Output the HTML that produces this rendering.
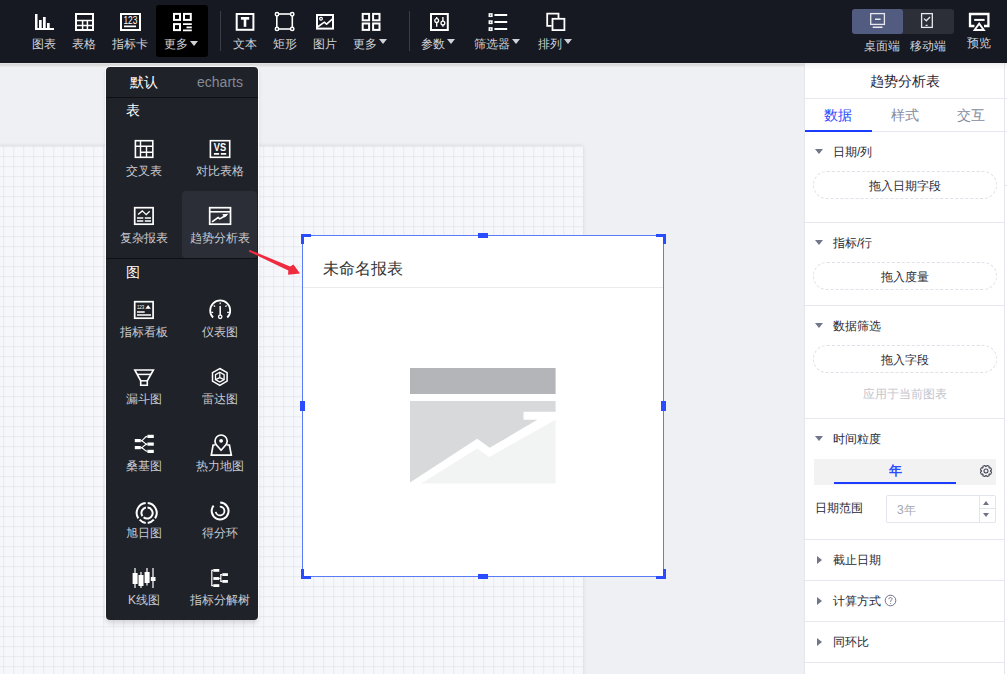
<!DOCTYPE html>
<html><head><meta charset="utf-8">
<style>
*{box-sizing:border-box;margin:0;padding:0}
html,body{width:1007px;height:674px;overflow:hidden}
body{position:relative;background:#eef0f4;font-family:"Liberation Sans",sans-serif;color:#333}
.abs{position:absolute}
#top{position:absolute;left:0;top:0;width:1007px;height:63px;background:#161921;z-index:10}
#tshadow{z-index:9;position:absolute;left:0;top:63px;width:804px;height:6px;background:linear-gradient(#e3e3e4 0,#d9d9da 1.5px,#e2e2e3 3px,#f3f3f4 5px,rgba(243,243,244,0) 6px)}
.tb{position:absolute;top:0;height:62px}
.tb svg{position:absolute;overflow:visible}
.tl{position:absolute;top:36px;height:16px;line-height:16px;font-size:12px;color:#d0d2d8;white-space:nowrap;text-align:center}
.sep{position:absolute;top:11px;width:1px;height:40px;background:#3a3d46}
.caret{display:inline-block;width:0;height:0;border-left:4px solid transparent;border-right:4px solid transparent;border-top:5.5px solid #d0d2d8;vertical-align:middle;margin-left:2px;position:relative;top:-3px}
#paper{position:absolute;left:-20px;top:146px;width:603px;height:560px;background-color:#f5f7fb;
background-image:linear-gradient(to right,rgba(50,54,66,.05) 1px,rgba(50,54,66,.017) 1px,rgba(50,54,66,.017) 2px,transparent 2px),linear-gradient(to bottom,rgba(50,54,66,.05) 1px,rgba(50,54,66,.017) 1px,rgba(50,54,66,.017) 2px,transparent 2px);
background-size:10px 10px;background-position:3px 10px;box-shadow:0 0 4px rgba(0,0,0,.12)}
#menu{z-index:11;position:absolute;left:106px;top:67px;width:152px;height:553px;background:#1f2229;border-radius:4px;box-shadow:1px 0 0 rgba(255,255,255,.85),-1px 0 0 rgba(255,255,255,.85),0 -1px 0 rgba(255,255,255,.7),0 3px 5px rgba(0,0,0,.14)}
.mt{position:absolute;top:8px;height:30px;line-height:30px;font-size:14px;text-align:center;width:76px}
.mh{position:absolute;left:19.5px;height:26px;line-height:26px;font-size:14px;color:#fff;font-weight:500}
.mi{position:absolute;width:76px;height:67px}
.mi svg{position:absolute;left:50%;top:16px;overflow:visible}
.mi span{position:absolute;left:0;width:76px;top:39px;height:16px;line-height:16px;font-size:12px;color:#c9cbd1;text-align:center;white-space:nowrap}
#widget{position:absolute;left:302px;top:235px;width:362px;height:342px;background:#fff;border:1px solid #5b7cf9}
.h{position:absolute;background:#2a4cff}
#panel{position:absolute;left:804px;top:62px;width:201px;height:612px;background:#fff;border-left:1px solid #e4e5ee;border-right:1px solid #e4e5ee}
.pt{position:absolute;height:20px;line-height:20px;font-size:12px;color:#262a36;white-space:nowrap}
.tri{position:absolute;width:0;height:0;border-left:4px solid transparent;border-right:4px solid transparent;border-top:5px solid #71768a}
.trir{position:absolute;width:0;height:0;border-top:4px solid transparent;border-bottom:4px solid transparent;border-left:5px solid #71768a}
.pill{position:absolute;left:8px;width:184px;height:28px;border:1px dashed #dfe1e8;border-radius:14px;text-align:center;line-height:28px;font-size:12px;color:#262a36}
.hr{position:absolute;left:0;width:199px;height:1px;background:#e6e7ef}
</style></head><body>

<div id="paper"></div>

<div id="top">
<div class="abs" style="left:156px;top:5px;width:52px;height:52px;background:#000;border-radius:3px"></div>
<div class="sep" style="left:220px"></div>
<div class="sep" style="left:409px"></div>
<div class="abs" style="left:852px;top:9px;width:102px;height:25px;background:#2c2f38;border-radius:3px"></div>
<div class="abs" style="left:852px;top:9px;width:51px;height:25px;background:#525b80;border-radius:3px"></div>
<div class="tl" style="left:-6px;width:100px">图表</div>
<div class="tl" style="left:34px;width:100px">表格</div>
<div class="tl" style="left:80px;width:100px">指标卡</div>
<div class="tl" style="left:131px;width:100px">更多<i class="caret" style="top:-1.5px"></i></div>
<div class="tl" style="left:195px;width:100px">文本</div>
<div class="tl" style="left:235px;width:100px">矩形</div>
<div class="tl" style="left:275px;width:100px">图片</div>
<div class="tl" style="left:320px;width:100px">更多<i class="caret"></i></div>
<div class="tl" style="left:388px;width:100px">参数<i class="caret"></i></div>
<div class="tl" style="left:447px;width:100px">筛选器<i class="caret"></i></div>
<div class="tl" style="left:505px;width:100px">排列<i class="caret"></i></div>
<div class="tl" style="left:831.5px;width:100px;top:38px">桌面端</div>
<div class="tl" style="left:878px;width:100px;top:38px">移动端</div>
<div class="tl" style="left:929px;width:100px;top:35px">预览</div>
<svg class="abs" style="left:0;top:0" width="1007" height="62" fill="none" stroke="#fff">
<!-- bar chart -->
<g fill="#fff" stroke="none">
<rect x="35" y="14" width="2.5" height="16"/><rect x="35" y="28" width="19" height="2"/>
<rect x="39" y="20" width="2.7" height="9"/><rect x="43" y="17" width="2.7" height="12"/><rect x="47" y="23" width="2.7" height="6"/>
</g>
<!-- table -->
<rect x="76" y="14" width="17" height="16" stroke-width="2"/>
<path d="M76 20.5H93M76 25.6H93M82.6 20.5V30M87.4 20.5V30" stroke-width="1.5"/>
<!-- 123 card -->
<rect x="121" y="14" width="19" height="16" stroke-width="2"/>
<text x="130.4" y="23.6" fill="#fff" stroke="none" font-family="Liberation Sans" font-size="10" text-anchor="middle" textLength="14" lengthAdjust="spacingAndGlyphs">123</text>
<rect x="124" y="25.5" width="12" height="1.7" fill="#fff" stroke="none"/>
<!-- more 1 -->
<rect x="174" y="13.9" width="6" height="6" stroke-width="2"/>
<rect x="184" y="13.9" width="6.8" height="6" stroke-width="2"/>
<rect x="174" y="24.1" width="6" height="6" stroke-width="2"/>
<path d="M183 24.2H191.8M186.5 27.3H191.8M183 30.3H191.8" stroke-width="1.8"/>
<!-- text T -->
<rect x="236.7" y="14" width="16.7" height="15.8" stroke-width="2"/>
<g fill="#fff" stroke="none"><rect x="240.9" y="17" width="8.3" height="2.7"/><rect x="243.7" y="19" width="2.6" height="7.8"/></g>
<!-- rectangle w/ corners -->
<rect x="276.8" y="14" width="15.5" height="15" stroke-width="1.6"/>
<g fill="#161921" stroke-width="1.5"><circle cx="277" cy="14.2" r="1.7"/><circle cx="292.2" cy="14.2" r="1.7"/><circle cx="277" cy="28.9" r="1.7"/><circle cx="292.2" cy="28.9" r="1.7"/></g>
<!-- picture -->
<rect x="317" y="15" width="16" height="13.6" stroke-width="2"/>
<circle cx="321" cy="18.8" r="1.4" stroke-width="1.2"/>
<path d="M317.5 27L324.3 22.2L326.6 24.2L332 19.3L333.5 20.7" stroke-width="1.6"/>
<!-- more 2 -->
<rect x="362.7" y="13.9" width="6.4" height="6.4" stroke-width="2"/>
<rect x="373.1" y="13.9" width="6.4" height="6.4" stroke-width="2"/>
<rect x="362.7" y="23.5" width="6.4" height="6.4" stroke-width="2"/>
<rect x="373.1" y="23.5" width="6.4" height="6.4" stroke-width="2"/>
<!-- params -->
<rect x="431" y="14" width="16.8" height="16" stroke-width="2"/>
<path d="M436.7 17V26.8M442.9 17V26.8" stroke-width="1.4"/>
<g fill="#161921" stroke-width="1.3"><circle cx="436.7" cy="20.6" r="1.9"/><circle cx="442.9" cy="23" r="1.9"/></g>
<!-- filter list -->
<rect x="489.3" y="13.9" width="2.6" height="2.4" stroke-width="1.5"/>
<rect x="489.3" y="21" width="2.6" height="2.4" stroke-width="1.5"/>
<rect x="489.3" y="27.9" width="2.6" height="2.4" stroke-width="1.5"/>
<path d="M494.4 15H507.2M494.4 21.9H507.2M494.4 28.9H507.2" stroke-width="2"/>
<!-- arrange -->
<path d="M551.6 25.9H547.2V13.6H558.5V17.9" stroke-width="1.8"/>
<rect x="552.5" y="18.8" width="11.9" height="11.3" stroke-width="1.8"/>
<!-- desktop -->
<rect x="870.7" y="13.6" width="13.7" height="10.8" stroke="#e8e9ee" stroke-width="1.3"/>
<path d="M875 19.3H880.6M872.7 27.2H882.5" stroke="#e8e9ee" stroke-width="1.4"/>
<!-- mobile -->
<rect x="921.6" y="13.6" width="10.7" height="13.8" stroke="#e8e9ee" stroke-width="1.3"/>
<path d="M924 18.6L926.3 20.8L930 17M925.6 25.4H927.6" stroke="#e8e9ee" stroke-width="1.3"/>
<!-- preview -->
<path d="M974.4 26H970V14H988.4V26H984" stroke-width="2.3"/>
<path d="M974.2 19.9H984.6" stroke-width="2"/>
<path d="M979.2 23.6L974.6 30H983.8Z" stroke-width="1.9" stroke-linejoin="miter"/>
</svg>
</div>

<div id="widget">
<div class="abs" style="left:20px;top:22px;height:22px;line-height:22px;font-size:16px;color:#333;white-space:nowrap">未命名报表</div>
<div class="abs" style="left:0;top:51px;width:360px;height:1px;background:#ebebeb"></div>
</div>
<div id="tshadow"></div>
<div class="abs" style="z-index:9;left:804px;top:63px;width:203px;height:8px;background:linear-gradient(rgba(0,0,0,.07),rgba(0,0,0,.03) 3px,rgba(0,0,0,0) 8px)"></div>
<svg class="abs" style="left:0;top:0" width="1007" height="674">
<rect x="410" y="368" width="145.6" height="26" fill="#b4b5b9"/>
<path d="M410 401H555.6V411.7H523.5V419.8H537.4L489.7 447.8L477.2 438.7L410 482.5Z" fill="#d8d9db"/>
<path d="M421.2 483.6L477.2 448.4L489.2 456.9L555.6 419.8V483.6Z" fill="#f2f3f3"/>
<g fill="#2a4cff">
<path d="M301 234H311V237H304V244H301Z"/>
<path d="M666 234H656V237H663V244H666Z"/>
<path d="M301 579H311V576H304V569H301Z"/>
<path d="M666 579H656V576H663V569H666Z"/>
<rect x="478" y="233" width="10" height="5"/>
<rect x="478" y="574" width="10" height="5"/>
<rect x="300" y="401" width="5" height="10"/>
<rect x="661" y="401" width="5" height="10"/>
</g>
</svg>

<div id="menu">
<div class="mt" style="left:0;top:0;color:#fff">默认</div>
<div class="mt" style="left:76px;top:0;color:#868a94">echarts</div>
<div class="abs" style="left:0;top:30px;width:152px;height:1px;background:#0e1014"></div>
<div class="mh" style="top:30px">表</div>
<div class="mi" style="left:0;top:57px"><span>交叉表</span></div>
<div class="mi" style="left:76px;top:57px"><span>对比表格</span></div>
<div class="mi" style="left:0;top:124px"><span>复杂报表</span></div>
<div class="mi" style="left:76px;top:124px;width:75px;height:67px;background:#2b2e36;border-radius:4px"><span>趋势分析表</span></div>
<div class="abs" style="left:0;top:191px;width:152px;height:1px;background:#0e1014"></div>
<div class="mh" style="top:192px">图</div>
<div class="mi" style="left:0;top:218px"><span>指标看板</span></div>
<div class="mi" style="left:76px;top:218px"><span>仪表图</span></div>
<div class="mi" style="left:0;top:285px"><span>漏斗图</span></div>
<div class="mi" style="left:76px;top:285px"><span>雷达图</span></div>
<div class="mi" style="left:0;top:352px"><span>桑基图</span></div>
<div class="mi" style="left:76px;top:352px"><span>热力地图</span></div>
<div class="mi" style="left:0;top:419px"><span>旭日图</span></div>
<div class="mi" style="left:76px;top:419px"><span>得分环</span></div>
<div class="mi" style="left:0;top:486px"><span>K线图</span></div>
<div class="mi" style="left:76px;top:486px"><span>指标分解树</span></div>
</div>
<svg id="micons" class="abs" style="left:0;top:0;z-index:12" width="1007" height="674" fill="none" stroke="#fff">
<!-- cross table -->
<rect x="135.4" y="140.7" width="17.4" height="16.6" stroke-width="1.6"/>
<path d="M140.5 140.7V157.3M135.4 146.3H152.8M146.5 146.3V157.3M140.5 152.3H152.8" stroke-width="1.4"/>
<!-- VS -->
<rect x="210.4" y="140.7" width="19.3" height="16.6" stroke-width="1.6"/>
<text x="220" y="150.9" fill="#fff" stroke="none" font-family="Liberation Sans" font-weight="bold" font-size="10.5" text-anchor="middle" textLength="12.3" lengthAdjust="spacingAndGlyphs">VS</text>
<path d="M213.9 153.9H219.1M220.8 153.9H226.2" stroke-width="1.6"/>
<!-- complex report -->
<rect x="134.7" y="207.7" width="18.4" height="16.5" stroke-width="1.7"/>
<path d="M138.1 214.6L142.3 210.9L146.2 214.6L149.7 211.2" stroke-width="1.3"/>
<path d="M137 218H143.3M144.8 218H151M137 221H143.3M144.8 221H151" stroke-width="1.5"/>
<!-- trend -->
<rect x="209.7" y="207.7" width="20.8" height="16.5" stroke-width="1.7"/>
<path d="M209.7 211.8H230.5" stroke-width="1.6"/>
<path d="M212 221.9L218.1 217.6L219.8 218.9L226.5 215" stroke-width="1.6"/>
<path d="M222.2 214.2L228.6 213.8L224.6 217.4Z" fill="#fff" stroke="none"/>
<!-- kpi board -->
<rect x="134.7" y="301.7" width="18.4" height="16.5" stroke-width="1.7"/>
<text x="140.6" y="308.9" fill="#fff" stroke="none" font-family="Liberation Sans" font-size="5.8" text-anchor="middle" textLength="7.4" lengthAdjust="spacingAndGlyphs">123</text>
<path d="M148.1 305L150.9 308.8H145.3Z" fill="#fff" stroke="none"/>
<path d="M137 312H144.7M137 315H151" stroke-width="1.6"/>
<!-- gauge -->
<path d="M213.1 317.5A10 10 0 1 1 227.3 317.5" stroke-width="1.8"/>
<path d="M220.2 302.5V304.3M213.8 305.5L215 306.7M226.6 305.5L225.4 306.7M211.5 312.3H213.2M228.9 312.3H227.2" stroke-width="1.2"/>
<path d="M220.2 306V315" stroke-width="1.5"/>
<circle cx="220.2" cy="316.8" r="1.7" stroke-width="1.3"/>
<!-- funnel -->
<path d="M134.8 370H153.4L147.3 380.8V385.3H140.7V380.8Z" stroke-width="1.6" stroke-linejoin="miter"/>
<path d="M137.2 374.4H151" stroke-width="1.5"/>
<path d="M140.7 380.8H147.3" stroke-width="1.5"/>
<!-- radar -->
<path d="M219.8 368.5L227.1 372.7V381.1L219.8 385.3L212.5 381.1V372.7Z" stroke-width="1.5"/>
<path d="M219.8 372.2L224.1 374.7V379.6L219.8 382.1L215.5 379.6V374.7Z" stroke-width="1.3"/>
<path d="M219.8 372.2V377.6L215.5 379.6M219.8 377.6L224.1 379.6" stroke-width="1.2"/>
<!-- sankey -->
<g fill="#fff" stroke="none">
<rect x="134.8" y="439" width="6" height="3.2"/><rect x="134.8" y="446" width="6" height="3.2"/>
<rect x="147.4" y="434.8" width="6.4" height="3.2"/><rect x="147.4" y="442.5" width="6.4" height="3.2"/><rect x="147.4" y="449.8" width="6.4" height="3.2"/>
</g>
<path d="M140.8 440.6C144 440.6 144 436.4 147.4 436.4M140.8 440.6C144 440.6 144 444.1 147.4 444.1M140.8 447.6C144 447.6 144 444.1 147.4 444.1M140.8 447.6C144 447.6 144 451.4 147.4 451.4" stroke-width="1.1"/>
<!-- map pin -->
<path d="M221.1 450.3L216.7 445.3A6.1 6.1 0 1 1 225.5 445.3Z" stroke-width="1.7" stroke-linejoin="round"/>
<circle cx="221.1" cy="440.8" r="1.9" fill="#fff" stroke="none"/>
<path d="M215.2 445H213.1L211.3 455.2H231.3L229.4 445H227.1" stroke-width="1.7"/>
<!-- sunburst -->
<g stroke-width="2">
<path d="M145.7 503A10 10 0 0 0 138.3 518.4"/><path d="M147.7 503A10 10 0 0 1 155.1 518.4"/>
<path d="M139.6 519.7A10 10 0 0 0 145.7 523"/><path d="M147.7 523A10 10 0 0 0 153.8 519.7"/>
<path d="M145.9 507.6A5.5 5.5 0 0 0 142.4 516.1"/><path d="M147.5 507.6A5.5 5.5 0 1 1 143.6 517.3"/>
</g>
<!-- score ring -->
<path d="M220.2 502.6A8.4 8.4 0 1 1 213.6 505.7" stroke-width="2"/>
<path d="M219.8 506.6A4.4 4.4 0 1 1 215.7 511.9" stroke-width="1.8"/>
<!-- k line -->
<path d="M135 568V588M141 572V588M147 568V585.5M153 568V588" stroke-width="1.2"/>
<g fill="#fff" stroke="none">
<rect x="132.6" y="573" width="5" height="11"/><rect x="138.5" y="575" width="5" height="11"/><rect x="144.6" y="572" width="5" height="11"/><rect x="150.8" y="577" width="4.7" height="4"/>
</g>
<!-- decomposition tree -->
<g fill="#fff" stroke="none">
<rect x="213.3" y="569" width="6" height="2.8"/><rect x="213.3" y="577.1" width="6" height="2.8"/><rect x="213.3" y="584.2" width="6" height="2.8"/>
<rect x="222.3" y="573.2" width="5.6" height="2.8"/><rect x="222.3" y="580" width="5.6" height="2.8"/>
</g>
<path d="M213.3 570.4H211.8V585.6H213.3M219.3 578.5H221.2M222.3 574.6H220.8V581.4H222.3" stroke-width="1.2"/>
</svg>

<svg class="abs" style="left:0;top:0;z-index:12" width="1007" height="674"><path d="M248.7 251.5L249.5 249.7L290.1 266.6L293.5 264.6L300 273.5L288.1 274.7L288.3 270.6Z" fill="#ef2b3f"/>
</svg>
<div class="abs" style="left:1005px;top:62px;width:2px;height:612px;background:#fff"></div>
<div id="panel">
<div class="abs" style="left:0;top:0;width:199px;height:36px;line-height:39px;text-align:center;font-size:14px;color:#1f2333">趋势分析表</div>
<div class="hr" style="top:36px;width:203px"></div>
<div class="abs" style="left:0;top:37px;width:66px;height:32px;line-height:32px;text-align:center;font-size:14px;color:#2c4bff">数据</div>
<div class="abs" style="left:66px;top:37px;width:67px;height:32px;line-height:32px;text-align:center;font-size:14px;color:#868b9e">样式</div>
<div class="abs" style="left:133px;top:37px;width:66px;height:32px;line-height:32px;text-align:center;font-size:14px;color:#868b9e">交互</div>
<div class="hr" style="top:69px;width:203px"></div>
<div class="abs" style="left:0;top:68px;width:67px;height:2px;background:#1c3cff"></div>

<div class="tri" style="left:10px;top:87px"></div>
<div class="pt" style="left:28px;top:80px">日期/列</div>
<div class="pill" style="top:109px">拖入日期字段</div>
<div class="hr" style="top:160px"></div>

<div class="tri" style="left:10px;top:178px"></div>
<div class="pt" style="left:28px;top:171px">指标/行</div>
<div class="pill" style="top:200px">拖入度量</div>
<div class="hr" style="top:243px"></div>

<div class="tri" style="left:10px;top:261px"></div>
<div class="pt" style="left:28px;top:254px">数据筛选</div>
<div class="pill" style="top:283px">拖入字段</div>
<div class="abs" style="left:0;width:199px;top:322px;height:20px;line-height:20px;text-align:center;font-size:12px;color:#c2c5ce">应用于当前图表</div>
<div class="hr" style="top:356px"></div>

<div class="tri" style="left:10px;top:374px"></div>
<div class="pt" style="left:28px;top:367px">时间粒度</div>
<div class="abs" style="left:9px;top:397px;width:182px;height:26px;background:#f2f2f2"></div>
<div class="abs" style="left:29px;top:420px;width:122px;height:2px;background:#1c3cff"></div>
<div class="abs" style="left:29px;top:397px;width:122px;height:23px;line-height:23px;text-align:center;font-size:13px;font-weight:bold;color:#2c4bff">年</div>
<svg class="abs" style="left:173px;top:401px" width="16" height="16" viewBox="0 0 16 16" fill="none" stroke="#3f4352" stroke-width="1.05">
<path d="M8.27 3.51L9.14 2.41L11.15 3.25L10.98 4.63L11.37 5.02L12.75 4.85L13.59 6.86L12.49 7.73L12.49 8.27L13.59 9.14L12.75 11.15L11.37 10.98L10.98 11.37L11.15 12.75L9.14 13.59L8.27 12.49L7.73 12.49L6.86 13.59L4.85 12.75L5.02 11.37L4.63 10.98L3.25 11.15L2.41 9.14L3.51 8.27L3.51 7.73L2.41 6.86L3.25 4.85L4.63 5.02L5.02 4.63L4.85 3.25L6.86 2.41L7.73 3.51Z" stroke-linejoin="round"/>
<circle cx="8" cy="8" r="2"/>
</svg>
<div class="pt" style="left:10px;top:436px">日期范围</div>
<div class="abs" style="left:81px;top:433px;width:110px;height:28px;border:1px solid #e3e5ec;border-radius:2px"></div>
<div class="abs" style="left:174px;top:434px;width:1px;height:26px;background:#e3e5ec"></div>
<div class="abs" style="left:175px;top:446px;width:15px;height:1px;background:#e3e5ec"></div>
<div class="abs" style="left:178px;top:439px;width:0;height:0;border-left:3px solid transparent;border-right:3px solid transparent;border-bottom:4px solid #6d7285"></div>
<div class="abs" style="left:178px;top:451px;width:0;height:0;border-left:3px solid transparent;border-right:3px solid transparent;border-top:4px solid #6d7285"></div>
<div class="pt" style="left:92px;top:438px;color:#a3a6b0">3年</div>
<div class="hr" style="top:477px"></div>

<div class="trir" style="left:12px;top:494px"></div>
<div class="pt" style="left:28px;top:488px">截止日期</div>
<div class="hr" style="top:518px"></div>

<div class="trir" style="left:12px;top:535px"></div>
<div class="pt" style="left:28px;top:529px">计算方式</div>
<svg class="abs" style="left:79px;top:532px" width="14" height="14" viewBox="0 0 14 14" fill="none" stroke="#6d7285" stroke-width="1">
<circle cx="6.5" cy="6.5" r="5.3"/>
<path d="M4.9 5.2C4.9 4.2 5.6 3.6 6.5 3.6C7.4 3.6 8.1 4.2 8.1 5C8.1 6 6.6 6.2 6.6 7.4V7.8"/>
<circle cx="6.6" cy="9.5" r="0.5" fill="#6d7285" stroke="none"/>
</svg>
<div class="hr" style="top:559px"></div>

<div class="trir" style="left:12px;top:576px"></div>
<div class="pt" style="left:28px;top:570px">同环比</div>
<div class="hr" style="top:600px"></div>
</div>
<div class="abs" style="left:1005px;top:185px;width:2px;height:1px;background:#e4e5ee"></div>

</body></html>
